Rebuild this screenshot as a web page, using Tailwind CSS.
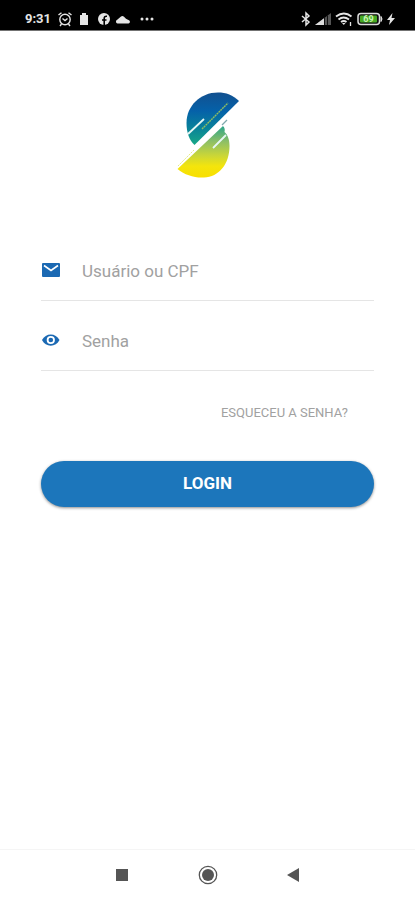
<!DOCTYPE html>
<html lang="pt-BR">
<head>
<meta charset="utf-8">
<meta name="viewport" content="width=device-width, initial-scale=1">
<title>Login</title>
<script src="https://cdn.jsdelivr.net/npm/@tailwindcss/browser@4"></script>
</head>
<body class="flex min-h-screen flex-col bg-white font-[Roboto,sans-serif]">
<header class="flex h-[31px] items-end justify-between border-b border-neutral-500 bg-black pr-5 pb-[3px] pl-[25px] text-neutral-200">
  <div class="flex h-4 items-center">
    <span class="w-7 text-[13px] font-bold">9:31</span>
    <svg class="ml-1 size-4" viewBox="0 0 16 16" fill="none" stroke="currentColor" stroke-width="1.4" aria-hidden="true"><circle cx="8" cy="8.5" r="5.2"/><path d="M1.5 4 4.5 1.7M14.5 4l-3-2.3M5.5 7.5 8 9.5l2.5-2M4.5 13 3 15M11.5 13l1.5 2"/></svg>
    <svg class="ml-1.5 h-4 w-2.5" viewBox="0 0 10 16" fill="currentColor" aria-hidden="true"><path d="M1 4h2V2h4v2h2v10H1z"/></svg>
    <svg class="ml-2 size-3.5" viewBox="0 0 14 14" aria-hidden="true"><circle cx="7" cy="7" r="6" fill="currentColor"/><path d="M7.2 13V6.3q0-2.3 2.8-2M5 8h4.5" fill="none" stroke="#000" stroke-width="1.6"/></svg>
    <svg class="ml-1 size-4" viewBox="0 0 16 16" fill="currentColor" aria-hidden="true"><path d="M2.500 12.500a2 2 0 0 1-.3-3.800L6 5.500q1.500-1 3 .2l2 2 3 1.600a1.700 1.700 0 0 1-.5 3.200z"/></svg>
    <svg class="ml-2 size-4" viewBox="0 0 16 16" fill="currentColor" aria-hidden="true"><circle cx="3" cy="8" r="1.5"/><circle cx="8" cy="8" r="1.5"/><circle cx="13" cy="8" r="1.5"/></svg>
  </div>
  <div class="flex h-4 items-center">
    <svg class="h-4 w-2.5" viewBox="0 0 10 16" fill="none" stroke="currentColor" stroke-width="1.5" aria-hidden="true"><path d="m1 5 7 6-3 3V2l3 3-7 6"/></svg>
    <svg class="ml-1 size-4" viewBox="0 0 16 16" aria-hidden="true"><path d="M0 14 16 2v12z" fill="#555"/><path d="M0 14 9 7.2V14z" fill="#ddd"/><path d="M9.5 7v7M12.5 4.5V14" stroke="#111"/></svg>
    <svg class="ml-1 h-4 w-[18px]" viewBox="0 0 18 16" fill="none" stroke="currentColor" stroke-width="1.9" aria-hidden="true"><path d="M1 5.5q8-6 15.500 0M3.500 8.500q5-4 10.500 0M6 11q2.800-2 5.500 0"/><path d="m7 12 1.800 2 1.700-2z" fill="currentColor" stroke="none"/><path d="M15.500 11v4" stroke-width="1.300"/></svg>
    <svg class="ml-1 h-4 w-[26px]" viewBox="0 0 26 16" aria-hidden="true"><rect x="1" y="2.5" width="21.5" height="11" rx="3" fill="#111" stroke="#ddd" stroke-width="1.5"/><rect x="3" y="4.5" width="17" height="7" rx="1" fill="#47aa24"/><path d="M24 5.500q2 2.500 0 5z" fill="#ddd" stroke="#ddd"/><text x="11.5" y="11" font-family="Roboto,sans-serif" font-size="9" font-weight="700" fill="#c9f5b4" text-anchor="middle">69</text></svg>
    <svg class="ml-1 h-4 w-2" viewBox="0 0 8 16" fill="currentColor" aria-hidden="true"><path d="M5.500 2 0 9h3l-1 5 6-7H4.500z"/></svg>
  </div>
</header>

<main class="flex flex-1 flex-col px-[41px] pt-15">
  <svg class="h-[88px] w-16 self-center" viewBox="0 0 64 88" role="img" aria-label="Logotipo">
    <defs>
      <linearGradient id="top" x1="0" y1="0" x2="0" y2="1"><stop offset="0" stop-color="#12508f"/><stop offset=".35" stop-color="#0561a9"/><stop offset=".65" stop-color="#087f9b"/><stop offset="1" stop-color="#18a886"/></linearGradient>
      <linearGradient id="bottom" x1="0" y1="0" x2="0" y2="1"><stop offset="0" stop-color="#2ba58a"/><stop offset=".3" stop-color="#8dbf66"/><stop offset=".57" stop-color="#c9d638"/><stop offset=".78" stop-color="#f4e50c"/><stop offset="1" stop-color="#f8df00"/></linearGradient>
    </defs>
    <path d="M63 10C57 4 50 1.5 42 1.5 24 1.5 10.500 15 10.500 32c0 9 2.500 17 8 22z" fill="url(#top)"/>
    <path d="M1.500 78 47 35c2 2 2 4 1.500 6 3.500 3 5 8 5 14C53.500 73 43 86 28 86.500 18 87 9 84 1.500 78z" fill="url(#bottom)"/>
    <path d="m12 43 16-15M37 57l13-13" stroke="#e6f7f5" stroke-width="1.8"/>
    <path d="m26 38 26-26" stroke="#8fbd62" stroke-width="1.4" stroke-dasharray="2 .6"/>
    <path d="m46 34 5-5" stroke="#7fa9ad" stroke-width="1.3"/>
    <path d="m2 75 16-16" stroke="#e5eb85" stroke-width="1" stroke-dasharray="2 1"/>
  </svg>

  <form class="mt-[62px] flex flex-col" onsubmit="return false">
    <div class="flex h-15 items-center border-b border-neutral-200">
      <label for="user" class="flex w-[41px] shrink-0" aria-label="Usuário ou CPF"><svg class="size-5" viewBox="0 0 20 20" aria-hidden="true"><rect x="1" y="2" width="18" height="14" rx="1" fill="#1b69b3"/><path d="m3 4.500 7 5 7-5" fill="none" stroke="#fff" stroke-width="1.6"/></svg></label>
      <input id="user" type="text" placeholder="Usuário ou CPF" class="h-10 min-w-0 flex-1 text-[17px] outline-none placeholder:text-neutral-400">
    </div>
    <div class="mt-2.5 flex h-15 items-center border-b border-neutral-200">
      <label for="password" class="flex w-[41px] shrink-0" aria-label="Senha"><svg class="size-5" viewBox="0 0 20 20" aria-hidden="true"><path d="M1 9C4.500 1.500 15 1.500 18.500 9 15 16.500 4.500 16.500 1 9z" fill="#1b69b3"/><circle cx="9.800" cy="9" r="3.2" fill="#1b69b3" stroke="#fff" stroke-width="1.8"/></svg></label>
      <input id="password" type="password" placeholder="Senha" class="h-10 min-w-0 flex-1 text-[17px] outline-none placeholder:text-neutral-400">
    </div>
    <a href="#" class="mt-8 mr-[26px] self-end text-[13px] leading-5 text-neutral-400">ESQUECEU A SENHA?</a>
    <button type="submit" class="mt-[38px] h-[46px] rounded-full bg-[#1c76bb] text-[17px] font-bold text-white shadow-[0_1px_3px_rgba(0,0,0,0.45)]">LOGIN</button>
  </form>
</main>

<nav class="flex h-[51px] items-center justify-center gap-[65px] border-t border-neutral-100 text-[#555]" aria-label="Navegação do sistema">
  <button type="button" aria-label="Recentes"><svg class="size-5" viewBox="0 0 20 20" fill="currentColor"><path d="M3 4h12v12H3z"/></svg></button>
  <button type="button" aria-label="Início"><svg class="size-5" viewBox="0 0 20 20"><circle cx="10" cy="10" r="8.7" fill="none" stroke="currentColor" stroke-width="1.3"/><circle cx="10" cy="10" r="6" fill="currentColor"/></svg></button>
  <button type="button" aria-label="Voltar"><svg class="size-5" viewBox="0 0 20 20" fill="currentColor"><path d="m4 10 12-7v14z"/></svg></button>
</nav>
</body>
</html>
